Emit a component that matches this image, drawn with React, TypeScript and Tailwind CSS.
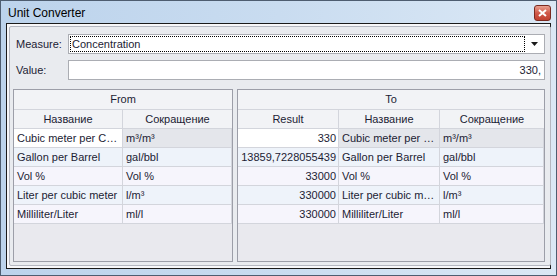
import React from 'react';

type Row = { name: string; abbr: string; result: string; toName: string };

const rows: Row[] = [
  { name: 'Cubic meter per C…', abbr: 'm³/m³', result: '330', toName: 'Cubic meter per …' },
  { name: 'Gallon per Barrel', abbr: 'gal/bbl', result: '13859,7228055439', toName: 'Gallon per Barrel' },
  { name: 'Vol %', abbr: 'Vol %', result: '33000', toName: 'Vol %' },
  { name: 'Liter per cubic meter', abbr: 'l/m³', result: '330000', toName: 'Liter per cubic m…' },
  { name: 'Milliliter/Liter', abbr: 'ml/l', result: '330000', toName: 'Milliliter/Liter' },
];

const rowBg = ['bg-[#e4e6eb]', 'bg-[#eef3fa]', 'bg-[#f6f5fc]', 'bg-[#eef3fa]', 'bg-[#f6f5fc]'];

const cell = 'h-[19px] border-r border-b border-[#d3d5dc] px-[3px] leading-[18px] whitespace-nowrap overflow-hidden';
const head = 'h-[19px] border-r border-b border-[#d3d5dc] bg-[#f2f3f6] text-center leading-[18px]';

const App: React.FC = () => {
  return (
    <div
      className="w-[557px] h-[276px] flex flex-col border border-[#4e5d70] bg-gradient-to-r from-[#bcd3ec] via-[#c9dcf0] to-[#dbe8f5] text-[11px] text-[#1c1c34]"
      style={{ fontFamily: '"Liberation Sans", Arial, sans-serif' }}
    >
      {/* title bar */}
      <div className="h-[22px] flex items-center justify-between pl-[7px] pr-[5px] pt-[1px]">
        <span className="text-[12px] text-black">Unit Converter</span>
        <div className="w-[17px] h-[16px] rounded-[3px] border border-[#7a2a20] bg-gradient-to-b from-[#e8a090] via-[#d0594a] to-[#c04030] flex items-center justify-center">
          <svg width="9" height="8" viewBox="0 0 9 8">
            <path d="M1 1 L8 7 M8 1 L1 7" stroke="white" strokeWidth="2" />
          </svg>
        </div>
      </div>

      {/* client */}
      <div className="flex-1 mx-[5px] mb-[6px] border border-[#1a1a1a] bg-[#f7f7f9] p-[2px] flex">
        <div className="flex-1 flex flex-col rounded-[2px] border border-[#b4b7c0] bg-[#e9ebef] pl-[3px] pr-[5px] pt-[7px] pb-[3px]">
          <div className="flex items-center h-[20px]">
            <span className="w-[55px] pl-[3px]">Measure:</span>
            <div className="flex-1 h-[20px] border border-[#abadb3] bg-white flex items-center pl-[1px] pr-[1px]">
              <div className="flex-1 h-[16px] border border-dotted border-black pl-[1px] leading-[14px]">Concentration</div>
              <div className="w-[18px] flex items-center justify-center">
                <svg width="7" height="4" viewBox="0 0 7 4">
                  <path d="M0 0 H7 L3.5 4 Z" fill="#1a1a1a" />
                </svg>
              </div>
            </div>
          </div>

          <div className="flex items-center h-[20px] mt-[6px]">
            <span className="w-[55px] pl-[3px]">Value:</span>
            <div className="flex-1 h-[20px] border border-[#abadb3] bg-white text-right pr-[3px] leading-[18px]">330,</div>
          </div>

          <div className="flex-1 flex gap-[4px] mt-[9px]">
            {/* From grid */}
            <div className="w-[220px] flex flex-col border border-[#9c9ea8] bg-[#e9e9ee]">
              <div className="grid grid-cols-[109px_109px]">
                <div className={`${head} col-span-2 h-[20px] border-r-0 leading-[19px]`}>From</div>
                <div className={head}>Название</div>
                <div className={`${head} border-r-0`}>Сокращение</div>
                {rows.map((r, i) => (
                  <React.Fragment key={i}>
                    <div className={`${cell} ${i === 0 ? 'bg-white' : rowBg[i]}`}>{r.name}</div>
                    <div className={`${cell} ${rowBg[i]}`}>{r.abbr}</div>
                  </React.Fragment>
                ))}
              </div>
            </div>

            {/* To grid */}
            <div className="flex-1 flex flex-col border border-[#9c9ea8] bg-[#e9e9ee]">
              <div className="grid grid-cols-[101px_101px_104px]">
                <div className={`${head} col-span-3 h-[20px] border-r-0 leading-[19px]`}>To</div>
                <div className={head}>Result</div>
                <div className={head}>Название</div>
                <div className={`${head} border-r-0`}>Сокращение</div>
                {rows.map((r, i) => (
                  <React.Fragment key={i}>
                    <div className={`${cell} text-right pr-[2px] ${i === 0 ? 'bg-white' : rowBg[i]}`}>{r.result}</div>
                    <div className={`${cell} ${rowBg[i]}`}>{r.toName}</div>
                    <div className={`${cell} ${rowBg[i]}`}>{r.abbr}</div>
                  </React.Fragment>
                ))}
              </div>
            </div>
          </div>
        </div>
      </div>
    </div>
  );
};

export default App;
